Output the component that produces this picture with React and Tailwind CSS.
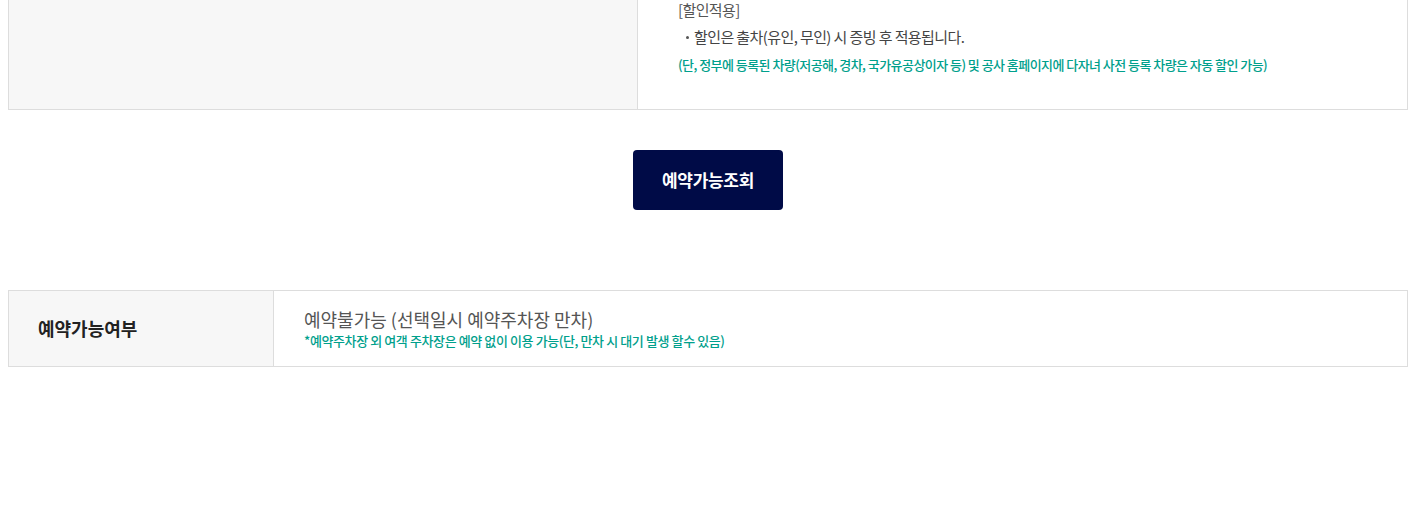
import React from "react";

const font = { fontFamily: '"Noto Sans CJK KR", "Noto Sans", sans-serif' };

export default function App() {
  return (
    <div className="w-[1418px] h-[523px] bg-white overflow-hidden pl-[8px] pr-[10px]" style={font}>
      {/* 할인 안내 (위쪽은 잘려 있음) */}
      <div className="flex border-x border-b border-[#dddddd]">
        <div className="w-[629px] bg-[#f7f7f7] border-r border-[#dddddd]"></div>
        <div className="flex-1 pl-[40px] pt-[1px] pb-[35px]">
          <p className="text-[15px] leading-[18px] text-[#555555] tracking-[-0.6px]">[할인적용]</p>
          <p className="mt-[9px] flex items-center text-[15px] leading-[18px] text-[#444444] tracking-[-0.6px]">
            <span className="w-[3px] h-[3px] rounded-full bg-[#555555] ml-[8px] mr-[5px]"></span>
            <span>할인은 출차(유인, 무인) 시 증빙 후 적용됩니다.</span>
          </p>
          <p className="mt-[10px] text-[13px] leading-[18px] font-medium text-[#00a08c] tracking-[-0.55px]">
            (단, 정부에 등록된 차량(저공해, 경차, 국가유공상이자 등) 및 공사 홈페이지에 다자녀 사전 등록 차량은 자동 할인 가능)
          </p>
        </div>
      </div>

      <div className="flex justify-center mt-[40px]">
        <button className="w-[150px] h-[60px] rounded-[4px] bg-[#000b47] text-white text-[17px] font-bold tracking-[-0.3px]">
          예약가능조회
        </button>
      </div>

      {/* 예약가능여부 */}
      <div className="mt-[80px] flex border border-[#dddddd] h-[77px]">
        <div className="w-[265px] bg-[#f7f7f7] border-r border-[#dddddd] flex items-center pl-[29px]">
          <span className="text-[18px] font-bold text-[#222222] tracking-[0px]">예약가능여부</span>
        </div>
        <div className="flex-1 pl-[30px] pt-[17px]">
          <p className="text-[18px] leading-[23px] text-[#555555] tracking-[0px]">예약불가능 (선택일시 예약주차장 만차)</p>
          <p className="mt-[1px] text-[13px] leading-[17px] font-medium text-[#00a08c] tracking-[-0.4px]">
            *예약주차장 외 여객 주차장은 예약 없이 이용 가능(단, 만차 시 대기 발생 할수 있음)
          </p>
        </div>
      </div>
    </div>
  );
}
